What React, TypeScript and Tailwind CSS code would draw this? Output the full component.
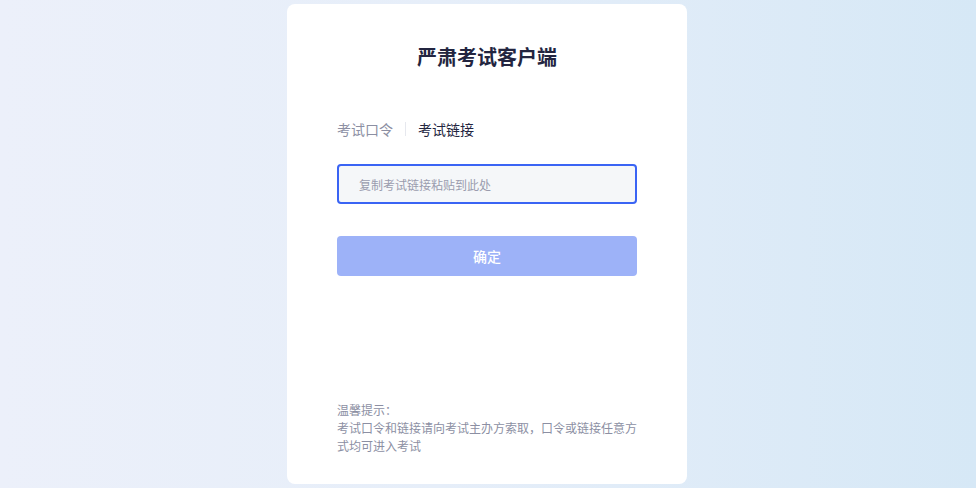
import React, { useState } from 'react';

const App: React.FC = () => {
  const [tab, setTab] = useState<'code' | 'link'>('link');
  const [value, setValue] = useState('');

  return (
    <div
      className="flex h-[488px] w-full justify-center bg-[linear-gradient(90deg,#ecf0fa_0%,#e6eef9_45%,#d6e8f6_100%)]"
      style={{ fontFamily: '"Noto Sans CJK SC", "Noto Sans", sans-serif' }}
    >
      <div className="mt-[4px] mr-[2px] flex h-[480px] w-[400px] flex-col rounded-lg bg-white px-[50px] pt-[39px] pb-[29px]">
        <h1 className="text-center text-[20px] leading-[28px] font-bold text-[#232540]">严肃考试客户端</h1>

        {/* tabs */}
        <div className="mt-[48px] flex items-center text-[14px] leading-[20px]">
          <button
            onClick={() => setTab('code')}
            className={tab === 'code' ? 'text-[#232540]' : 'text-[#8c8fa3]'}
          >
            考试口令
          </button>
          <span className="mx-[12px] h-[14px] w-px bg-[#e6e8ee]" />
          <button
            onClick={() => setTab('link')}
            className={tab === 'link' ? 'text-[#232540]' : 'text-[#8c8fa3]'}
          >
            考试链接
          </button>
        </div>

        <input
          value={value}
          onChange={(e) => setValue(e.target.value)}
          placeholder={tab === 'link' ? '复制考试链接粘贴到此处' : '请输入考试口令'}
          className="mt-[25px] h-[40px] w-full rounded-[4px] border-2 border-[#3a64f4] bg-[#f5f7f9] px-[20px] text-[12px] text-[#232540] outline-none placeholder:text-[#9a9cae]"
        />

        <button className="mt-[32px] h-[40px] w-full rounded-[4px] bg-[#9db2f8] text-[14px] font-medium text-white">
          确定
        </button>

        <div className="mt-auto text-[12px] leading-[18px] text-[#8c8fa3]">
          <p>温馨提示：</p>
          <p>考试口令和链接请向考试主办方索取，口令或链接任意方式均可进入考试</p>
        </div>
      </div>
    </div>
  );
};

export default App;
